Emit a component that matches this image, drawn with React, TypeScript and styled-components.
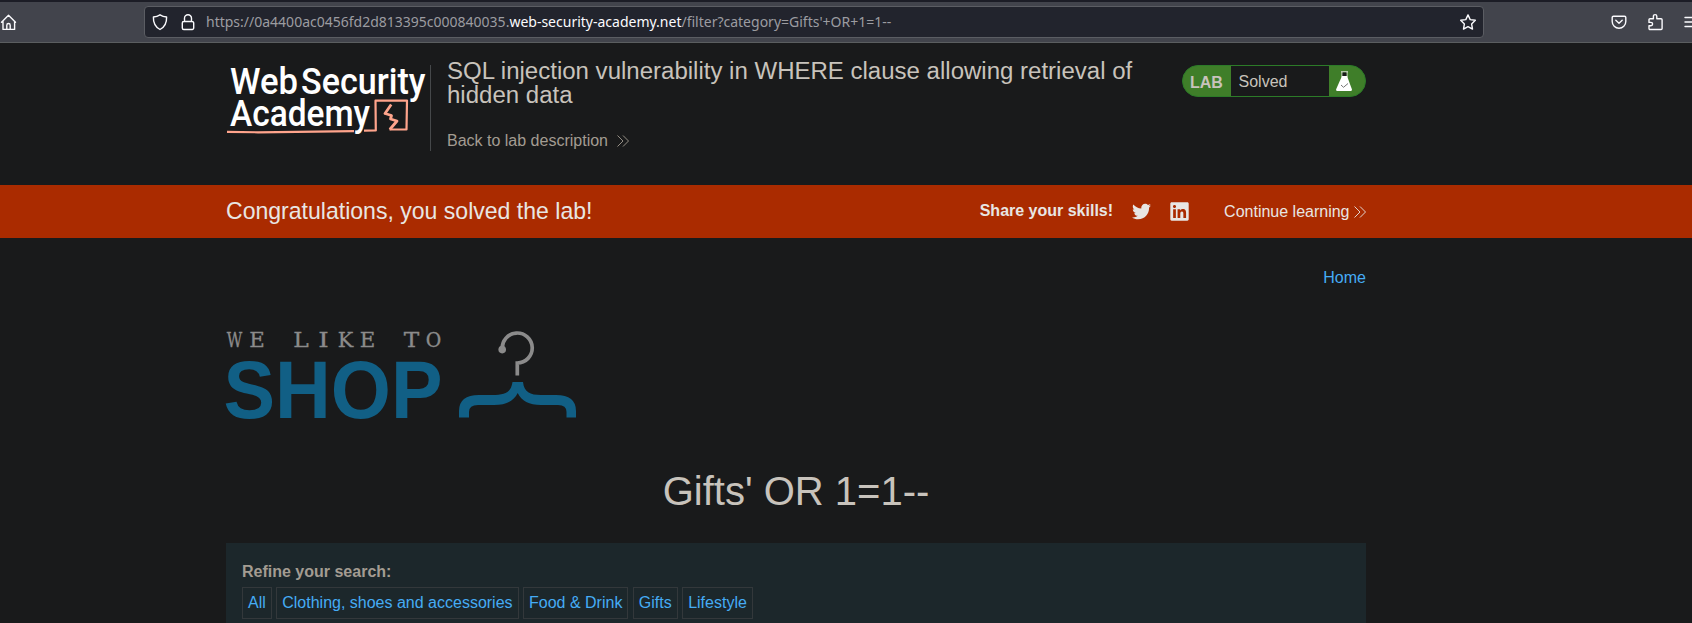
import React from 'react';
import styled, { createGlobalStyle } from 'styled-components';
import { FaTwitter, FaLinkedin } from 'react-icons/fa';

const GlobalStyle = createGlobalStyle`
  * { box-sizing: border-box; }
  body {
    margin: 0;
    background: #191a1b;
    color: #c8c3bc;
    font: 16px/1.25 "Liberation Sans", Arial, sans-serif;
    overflow: hidden;
  }
`;

const Page = styled.div`
  height: 623px;
  overflow: hidden;
`;

const Toolbar = styled.div`
  height: 43px;
  display: flex;
  align-items: flex-start;
  border-top: 2px solid #1c1d26;
  border-bottom: 1px solid #5b5e60;
  background: #42444c;
  color: #fbfbfe;
  overflow: hidden;
`;

const ToolIcon = styled.svg<{ $left?: number }>`
  flex: none;
  display: block;
  width: 18px;
  height: 18px;
  margin: 11px 0 0 ${(p) => p.$left ?? 0}px;
  fill: none;
  stroke: currentColor;
  stroke-width: 1.4;
  stroke-linejoin: round;
  stroke-linecap: round;
`;

const AddressBar = styled.div`
  flex: none;
  display: flex;
  align-items: center;
  width: 1340px;
  height: 32px;
  margin: 4px 0 0 126px;
  padding: 0 6px;
  border: 1px solid #5b5d63;
  border-radius: 4px;
  background: #22242d;
  ${ToolIcon} { margin-top: 0; }
`;

const Url = styled.div`
  flex: 1;
  margin-left: 9px;
  font: 14px/20px "Noto Sans", sans-serif;
  color: #9c9ca1;
  white-space: pre;
  b { font-weight: 400; color: #fbfbfe; }
`;

const Container = styled.div`
  width: 1140px;
  margin-left: 226px;
`;

const LabHeader = styled(Container)`
  display: flex;
  align-items: flex-start;
  height: 142px;
  padding-top: 22px;
`;

const AcademyLogo = styled.svg`
  flex: none;
  display: block;
  width: 204px;
  height: 86px;
  overflow: visible;
`;

const TitleBlock = styled.div`
  width: 735px;
  height: 86px;
  padding-left: 16px;
  border-left: 1px solid #45484a;
`;

const Title = styled.h2`
  margin: -6px 0 0;
  font-size: 24.03px;
  font-weight: 400;
  line-height: 24px;
`;

const ArrowLink = styled.a<{ $gap: number; $color: string }>`
  display: flex;
  align-items: center;
  gap: ${(p) => p.$gap}px;
  line-height: 20px;
  color: ${(p) => p.$color};
  white-space: nowrap;
`;

const BackRow = styled.div`
  margin-top: 24px;
`;

const LabStatus = styled.div`
  display: flex;
  align-items: center;
  width: 184px;
  height: 32px;
  margin-left: auto;
  border: 1px solid #2c7b28;
  border-radius: 16px;
  background: #3f7e29;
  overflow: hidden;
`;

const LabTag = styled.b`
  width: 48px;
  padding-left: 7px;
  padding-top: 3px;
`;

const LabState = styled.div`
  width: 98px;
  height: 30px;
  padding-left: 7.500px;
  line-height: 31px;
  background: #191a1b;
`;

const Flask = styled.svg`
  display: block;
  width: 16px;
  height: 20px;
  margin-left: 7px;
`;

const Banner = styled.div`
  height: 53px;
  background: #aa2b00;
  color: #e8e6e3;
`;

const BannerInner = styled(Container)`
  display: flex;
  align-items: center;
  height: 53px;
`;

const Congrats = styled.div`
  flex: 1;
  margin-top: -2px;
  font-size: 23.05px;
  line-height: 26px;
`;

const Share = styled.div`
  display: flex;
  align-items: center;
  gap: 19px;
  margin: -1px 34px 0 0;
  font-weight: 700;
  svg { display: block; margin-top: 1px; }
  svg:last-child { margin-left: -1px; }
`;

const HomeRow = styled(Container)`
  display: flex;
  justify-content: flex-end;
  padding-top: 30px;
  line-height: 20px;
  color: #45acf5;
`;

const ShopLogo = styled.svg`
  display: block;
  width: 352px;
  height: 96px;
  margin-top: 38px;
  overflow: visible;
`;

const Heading = styled.h1`
  margin: 45px 0 0;
  font-size: 40px;
  font-weight: 400;
  line-height: 48px;
  text-align: center;
`;

const SearchPanel = styled.section`
  height: 100px;
  margin-top: 28px;
  padding: 19px 16px;
  background: #1c272b;
`;

const PanelLabel = styled.div`
  font-weight: 700;
  line-height: 20px;
  color: #a39c92;
`;

const Filters = styled.div`
  display: flex;
  gap: 4.45px;
  margin-top: 5px;
`;

const Filter = styled.a`
  height: 32px;
  padding: 0 5px;
  border: 1px solid #33383b;
  line-height: 29px;
  color: #45acf5;
  white-space: nowrap;
`;

const Chevrons = () => (
  <svg width="12" height="12" viewBox="0 0 12 12" fill="none" stroke="currentColor" strokeWidth="0.9">
    <path d="M.5.5 6 6 .5 11.5M6 .5 11.5 6 6 11.5" />
  </svg>
);

const filters = ['All', 'Clothing, shoes and accessories', 'Food & Drink', 'Gifts', 'Lifestyle'];

const tagline: [string, number][] = [
  ['W', 8.5], ['E', 31], ['L', 75], ['I', 97.5], ['K', 119.5], ['E', 141.5], ['T', 185.5], ['O', 207.5],
];

export default function App() {
  return (
    <Page>
      <GlobalStyle />
      <Toolbar>
        <ToolIcon viewBox="0 0 18 18">
          <path d="M1.5 9.2 8.5 2.3l7 6.9M3 8.2v8.2h11.6V8.2M6.8 16.2v-4a1.7 1.7 0 0 1 3.4 0v4" />
        </ToolIcon>
        <AddressBar>
          <ToolIcon $left={0} viewBox="0 0 18 18">
            <path d="M9 1.8c2 1.3 4.3 2 6.6 2.2C15.8 9.5 13.8 14 9 16.5 4.2 14 2.2 9.5 2.4 4 4.7 3.8 7 3.1 9 1.8Z" />
          </ToolIcon>
          <ToolIcon $left={10} viewBox="0 0 18 18">
            <path d="M5.5 8.5V5.3a3.5 3.5 0 0 1 7 0v3.2M4.8 8.5h8.4a1.5 1.5 0 0 1 1.5 1.5v5a1.500 1.500 0 0 1-1.500 1.500H4.800A1.500 1.500 0 0 1 3.300 15v-5a1.500 1.500 0 0 1 1.500-1.500Z" />
          </ToolIcon>
          <Url>https://0a4400ac0456fd2d813395c000840035.<b>web-security-academy.net</b>/filter?category=Gifts'+OR+1=1--</Url>
          <ToolIcon viewBox="0 0 18 18">
            <path d="m9 1.900 2.200 4.700 5.100.700-3.700 3.600.900 5.200L9 13.600l-4.500 2.500.900-5.200L1.700 7.300l5.100-.700Z" />
          </ToolIcon>
        </AddressBar>
        <ToolIcon $left={126} viewBox="0 0 18 18">
          <path d="M3.500 3.200h11a1.300 1.300 0 0 1 1.300 1.300V8.500a6.800 6.800 0 0 1-13.600 0V4.500a1.300 1.300 0 0 1 1.300-1.300ZM5.800 7.300 9 10.300l3.200-3" />
        </ToolIcon>
        <ToolIcon $left={19} viewBox="0 0 18 18">
          <path d="M3 5.800h3.400V3.300a1.700 1.700 0 0 1 3.400 0v2.500h4.300a1 1 0 0 1 1 1v8.700a1 1 0 0 1-1 1H3a1 1 0 0 1-1-1v-2.700h1.900a1.700 1.700 0 0 0 0-3.400H2V6.800a1 1 0 0 1 1-1Z" />
        </ToolIcon>
        <ToolIcon $left={18} viewBox="0 0 18 18">
          <path d="M2 4.500h14M2 9h14M2 13.500h14" />
        </ToolIcon>
      </Toolbar>

      <LabHeader>
        <AcademyLogo viewBox="0 0 204 86">
          <g fill="#fff" fontFamily="Roboto, sans-serif" fontWeight="500" fontSize="37.500">
            <text x="4" y="28.500" textLength="68" lengthAdjust="spacingAndGlyphs">Web</text>
            <text x="75" y="28.500" textLength="124.500" lengthAdjust="spacingAndGlyphs">Security</text>
            <text x="4" y="61" textLength="140" lengthAdjust="spacingAndGlyphs">Academy</text>
          </g>
          <path
            d="M1 66.800 32 67.300 128 66.200M138 65.700 149.800 65.500 149.500 35.700 181 35.500 180.500 64.500 163.500 64.500"
            fill="none" stroke="#ffa48c" strokeWidth="2.200" strokeLinejoin="round"
          />
          <path
            d="M165.200 39.500 159 48.500 165.500 50.500 164.500 54 171 56 163.800 64.500"
            fill="none" stroke="#ffa48c" strokeWidth="2.800" strokeLinejoin="round"
          />
        </AcademyLogo>
        <TitleBlock>
          <Title>SQL injection vulnerability in WHERE clause allowing retrieval of hidden data</Title>
          <BackRow>
            <ArrowLink $gap={9} $color="#a39c92">Back to lab description <Chevrons /></ArrowLink>
          </BackRow>
        </TitleBlock>
        <LabStatus>
          <LabTag>LAB</LabTag>
          <LabState>Solved</LabState>
          <Flask viewBox="0 0 16 20">
            <path d="M5 .8h7M6 1v5.500M11 1v5.500" stroke="#e8e6e3" fill="none" />
            <path d="M6.500 1.500h4V5h-4Z" fill="#191a1b" />
            <path d="M6 5h5l5 13.500q0 1.500-1.500 1.500h-13Q0 20 0 18.500Z" fill="#fff" />
            <path d="m5 14 2.500 2.300L12 12.500" stroke="#777" fill="none" />
          </Flask>
        </LabStatus>
      </LabHeader>

      <Banner>
        <BannerInner>
          <Congrats>Congratulations, you solved the lab!</Congrats>
          <Share>
            Share your skills!
            <FaTwitter size={19} />
            <FaLinkedin size={21} />
          </Share>
          <ArrowLink $gap={4.5} $color="#e8e6e3">Continue learning <Chevrons /></ArrowLink>
        </BannerInner>
      </Banner>

      <HomeRow>Home</HomeRow>
      <Container>
        <ShopLogo viewBox="0 0 352 96">
          <g fill="#8b8b8b" stroke="#8b8b8b" strokeWidth="0.300" fontFamily="'DejaVu Serif Condensed', 'DejaVu Serif', serif" fontSize="20.500" textAnchor="middle">
            {tagline.map(([letter, x]) => (
              <text key={x} x={x} y="21" textLength={letter === 'I' ? 10.5 : 15.5} lengthAdjust="spacingAndGlyphs">{letter}</text>
            ))}
          </g>
          <text x="-2.500" y="91.500" fill="#115f85" fontFamily="'Liberation Sans', sans-serif" fontWeight="700" fontSize="81" textLength="219" lengthAdjust="spacingAndGlyphs">SHOP</text>
          <path d="M276.300 23.500A15 15 0 1 1 291.300 37V49.500" fill="none" stroke="#8b8b8b" strokeWidth="3.700" />
          <circle cx="276.200" cy="23.600" r="3.800" fill="#8b8b8b" />
          <path
            d="M286.500 56h10.500C298 66 304 69 315 69h15Q350 69 350 85v6.500h-9.500V86Q340.500 79 332 79H315C303 79 295.500 75 291.700 67 288 75 280 79 268 79h-16Q243 79 243 86v5.500h-10V85q0-16 20-16h13c14 0 19-3 20.500-13Z"
            fill="#115f85"
          />
        </ShopLogo>
        <Heading>Gifts' OR 1=1--</Heading>
        <SearchPanel>
          <PanelLabel>Refine your search:</PanelLabel>
          <Filters>
            {filters.map((f) => <Filter key={f}>{f}</Filter>)}
          </Filters>
        </SearchPanel>
      </Container>
    </Page>
  );
}
